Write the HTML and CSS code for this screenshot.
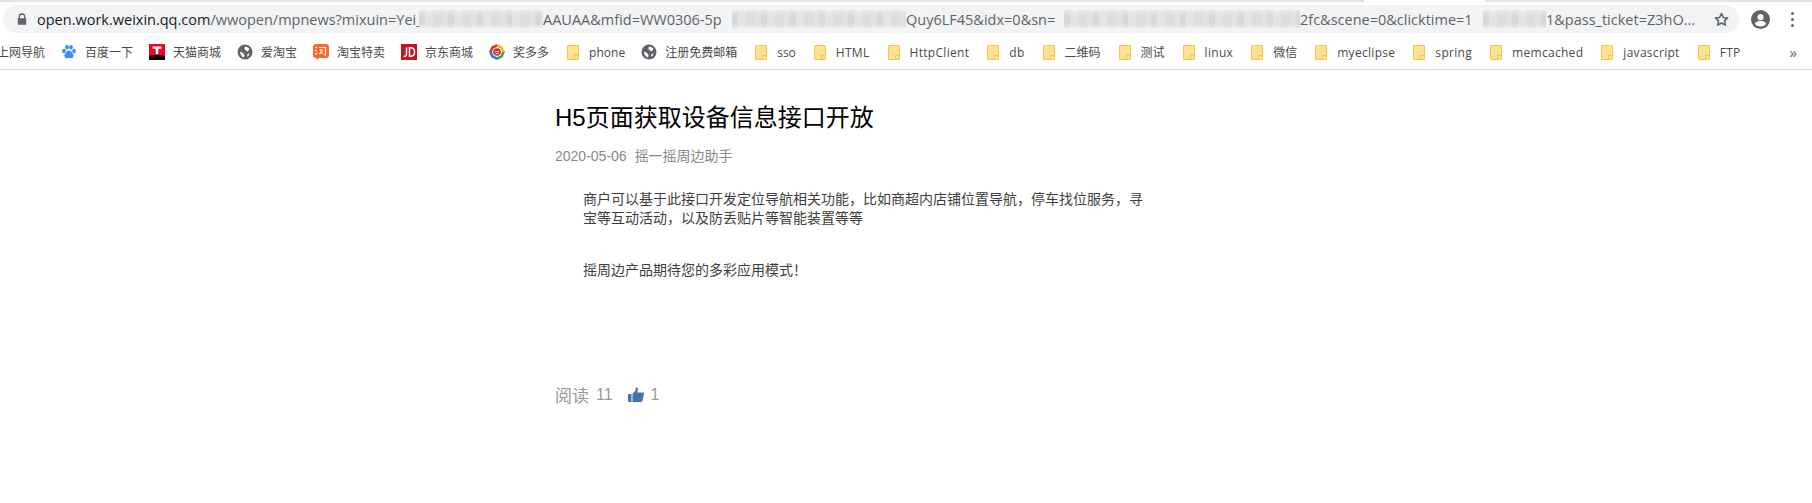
FILE: index.html
```html
<!DOCTYPE html>
<html lang="zh-CN">
<head>
    <meta charset="UTF-8">
    <title>H5页面获取设备信息接口开放</title>
    <link rel="stylesheet" href="styles.css">
</head>
<body>

    <div class="tab-strip"><span class="tab-gap"></span></div>

    <div class="toolbar">
        <div class="omnibox">
            <svg class="lock" viewBox="0 0 12 14"><path d="M2 6V4.200a4 4 0 0 1 8 0V6h1v8H1V6zm1.600 0h4.800V4.200a2.400 2.400 0 0 0-4.800 0z" fill="#5f6368"/></svg>
            <div class="url">
                <span class="seg seg-1"><b>open.work.weixin.qq.com</b>/wwopen/mpnews?mixuin=Yei_</span>
                <span class="blur blur-1"></span>
                <span class="seg seg-2">AAUAA&amp;mfid=WW0306-5p</span>
                <span class="blur blur-2"></span>
                <span class="seg seg-3">Quy6LF45&amp;idx=0&amp;sn=</span>
                <span class="blur blur-3"></span>
                <span class="seg seg-4">2fc&amp;scene=0&amp;clicktime=1</span>
                <span class="blur blur-4"></span>
                <span class="seg seg-5">1&amp;pass_ticket=Z3hO...</span>
            </div>
            <svg class="star" viewBox="0 0 24 24"><path d="M12 3.500l2.600 5.600 6.100.7-4.500 4.200 1.200 6L12 17l-5.400 3 1.200-6-4.500-4.200 6.100-.7z" fill="none" stroke="#5f6368" stroke-width="2.200" stroke-linejoin="round"/></svg>
        </div>
        <svg class="avatar" viewBox="0 0 20 20"><circle cx="10" cy="10" r="10" fill="#5f6368"/><circle cx="10" cy="7.500" r="3.200" fill="#fff"/><path d="M3.800 14.400c1.300-2.100 3.900-3.100 6.200-3.100s4.900 1 6.200 3.100a8 8 0 0 1-12.400 0z" fill="#fff"/></svg>
        <div class="menu-dots"><i></i><i></i><i></i></div>
    </div>

    <div class="bookmarks">
        <span class="bm bm-first">上网导航</span>
        <span class="bm">
            <svg class="ico" viewBox="0 0 16 16"><g fill="#3d8bf2"><ellipse cx="3" cy="7" rx="1.800" ry="2.300"/><ellipse cx="6" cy="3.300" rx="1.800" ry="2.300"/><ellipse cx="10" cy="3.300" rx="1.800" ry="2.300"/><ellipse cx="13" cy="7" rx="1.800" ry="2.300"/><path d="M8 6.500c2 0 2.500 1.700 3.600 2.800 1.300 1.300 1.400 4.700-1.300 4.900-1 .1-1.500-.4-2.300-.4s-1.300.5-2.300.4C3 14 3.100 10.600 4.400 9.300 5.500 8.200 6 6.500 8 6.500z"/></g></svg>
            百度一下
        </span>
        <span class="bm">
            <svg class="ico" viewBox="0 0 16 16"><rect width="16" height="16" fill="#000"/><path d="M0 0h16v12c-2 0-2-1-4-1H4c-2 0-2 1-4 1z" fill="#f40028"/><path d="M3.500 2.500h9v2.300H9.300V10H6.700V4.800H3.500z" fill="#fff"/></svg>
            天猫商城
        </span>
        <span class="bm">
            <svg class="ico" viewBox="0 0 16 16"><circle cx="8" cy="8" r="7.500" fill="#5f6368"/><path d="M8 2.500c2 .2 3.600 1 4.400 2.400L10.700 7.400 8.900 6.600 7.300 5zM3 7.500l3 1.500 1.500 2-.5 2.700C4.800 13 3.200 10.500 3 7.500zM10.500 10l2-.5c-.3 1.500-1 2.500-2.300 3.300z" fill="#fff"/></svg>
            爱淘宝
        </span>
        <span class="bm">
            <svg class="ico" viewBox="0 0 16 16"><path d="M3 0h10a3 3 0 0 1 3 3v8a3 3 0 0 1-3 3H6l-2.500 2v-2H3a3 3 0 0 1-3-3V3a3 3 0 0 1 3-3z" fill="#f5692a"/><path d="M2.500 3l1.500 1M2 6l1.500 1M2.500 11l1.500-2.500M6 3.500h6.500V11l-1.500-.5M6.500 6H10M8 6v3M6 9.500l4-.8" fill="none" stroke="#fff" stroke-width="1.100"/></svg>
            淘宝特卖
        </span>
        <span class="bm">
            <svg class="ico" viewBox="0 0 16 16"><rect width="16" height="16" fill="#c6121f"/><path d="M5.500 3.500v6.700c0 1.500-1 2.300-2.800 2.300M8.500 3.700v8.600h1.500c2.500 0 3.500-2 3.500-4.300S12.500 3.700 10 3.700z" fill="none" stroke="#fff" stroke-width="1.500"/></svg>
            京东商城
        </span>
        <span class="bm">
            <svg class="ico" viewBox="0 0 16 16"><path d="M8 0l5.500 2.500L16 8h-3l-1.500-3.500L8 3z" fill="#f3b91d"/><path d="M16 8l-2.500 5.500L8 16v-3l3.500-1.500L13 8z" fill="#3aa655"/><path d="M8 16l-5.500-2.500L0 8h3l1.500 3.500L8 13z" fill="#2f7fd1"/><path d="M0 8l2.500-5.500L8 0v3L4.500 4.500 3 8z" fill="#d93a2b"/><circle cx="8" cy="8" r="3.800" fill="#c9362a"/><path d="M6 7.500h4M6.500 9.500h3" stroke="#f3c9c4" stroke-width="1"/></svg>
            奖多多
        </span>
        <span class="bm"><span class="folder"></span>phone</span>
        <span class="bm">
            <svg class="ico" viewBox="0 0 16 16"><circle cx="8" cy="8" r="7.500" fill="#5f6368"/><path d="M8 2.500c2 .2 3.600 1 4.400 2.400L10.700 7.400 8.900 6.600 7.300 5zM3 7.500l3 1.500 1.500 2-.5 2.700C4.800 13 3.200 10.500 3 7.500zM10.500 10l2-.5c-.3 1.500-1 2.500-2.300 3.300z" fill="#fff"/></svg>
            注册免费邮箱
        </span>
        <span class="bm"><span class="folder"></span>sso</span>
        <span class="bm wide"><span class="folder"></span>HTML</span>
        <span class="bm wide"><span class="folder"></span>HttpClient</span>
        <span class="bm wide"><span class="folder"></span>db</span>
        <span class="bm"><span class="folder"></span>二维码</span>
        <span class="bm"><span class="folder"></span>测试</span>
        <span class="bm wide"><span class="folder"></span>linux</span>
        <span class="bm"><span class="folder"></span>微信</span>
        <span class="bm wide"><span class="folder"></span>myeclipse</span>
        <span class="bm wide"><span class="folder"></span>spring</span>
        <span class="bm wide"><span class="folder"></span>memcached</span>
        <span class="bm wide"><span class="folder"></span>javascript</span>
        <span class="bm wide"><span class="folder"></span>FTP</span>
        <span class="more">»</span>
    </div>

    <div class="article">
        <h1 class="title">H5页面获取设备信息接口开放</h1>
        <div class="meta"><span>2020-05-06</span><span>摇一摇周边助手</span></div>
        <div class="content">
            <p>商户可以基于此接口开发定位导航相关功能，比如商超内店铺位置导航，停车找位服务，寻宝等互动活动，以及防丢贴片等智能装置等等</p>
            <p class="last">摇周边产品期待您的多彩应用模式！</p>
        </div>
        <div class="stats">
            <span class="read">阅读</span>
            <span class="num">11</span>
            <svg class="thumb" viewBox="0 0 16 16"><path d="M0 7h3.500v8H1a1 1 0 0 1-1-1z" fill="#3f76ab"/><path d="M4.500 7l3-3.500V1c0-.7 2.300-.8 2.500 1 .1 1-.5 2.500-.8 3.500H14.500c1.300 0 1.700 1 1.400 2l-1.400 6c-.2.800-.7 1.500-1.700 1.500H4.500z" fill="#3f76ab"/></svg>
            <span class="num">1</span>
        </div>
    </div>

</body>
</html>
```

FILE: styles.css
```css
* {
    box-sizing: border-box;
}

body {
    margin: 0;
    background-color: #fff;
    font-family: "Liberation Sans", "Noto Sans CJK SC", sans-serif;
    overflow: hidden;
}

.tab-strip {
    height: 2px;
    background-color: #dee1e6;
    padding-left: 1364px;
}

.tab-gap {
    display: block;
    width: 121px;
    height: 2px;
    background-color: #fff;
}

/* address bar */
.toolbar {
    display: flex;
    align-items: center;
    height: 33px;
    padding: 3px 0 2px 3px;
}

.omnibox {
    display: flex;
    align-items: center;
    width: 1736px;
    height: 28px;
    padding-left: 14px;
    background-color: #f1f3f4;
    border-radius: 14px;
}

.lock {
    width: 10px;
    height: 12px;
    flex: none;
}

.url {
    display: flex;
    align-items: center;
    width: 1676px;
    margin-left: 10px;
    font-family: "Open Sans", "Liberation Sans", sans-serif;
    font-size: 14.500px;
    color: #5f6368;
    white-space: nowrap;
}

.url b {
    font-weight: normal;
    color: #202124;
}

.seg {
    display: block;
    flex: none;
}

.seg-1 { width: 382px; }
.seg-2 { width: 189px; }
.seg-3 { width: 158px; }
.seg-4 { width: 183px; }
.seg-5 { width: 156px; }

/* the smudged parts of the url */
.blur {
    display: block;
    flex: none;
    height: 18px;
    background-color: #dfe1e3;
    background-image:
        linear-gradient(180deg, rgba(241, 243, 244, 0.6), rgba(241, 243, 244, 0) 35%, rgba(241, 243, 244, 0) 75%, rgba(241, 243, 244, 0.6)),
        repeating-linear-gradient(90deg, #d6d8db 0, #d6d8db 6px, #e2e3e5 6px, #e2e3e5 14px, #dadcde 14px, #dadcde 23px, #dfe1e3 23px, #dfe1e3 29px);
}

.blur-1 { width: 124px; }
.blur-2 { width: 174px; }
.blur-3 { width: 236px; }
.blur-4 { width: 63px; }

.star {
    width: 17px;
    height: 17px;
    flex: none;
}

.avatar {
    width: 19px;
    height: 19px;
    margin-left: 12px;
    flex: none;
}

.menu-dots {
    display: flex;
    flex-direction: column;
    gap: 3px;
    margin-left: 21px;
}

.menu-dots i {
    display: block;
    width: 3px;
    height: 3px;
    border-radius: 50%;
    background-color: #5f6368;
}

/* bookmark row */
.bookmarks {
    display: flex;
    align-items: center;
    gap: 16px;
    height: 35px;
    border-bottom: 1px solid #dadce0;
    font-family: "Open Sans", "Noto Sans CJK SC", sans-serif;
    font-size: 12px;
    color: #4a4a4a;
    white-space: nowrap;
}

.bm {
    display: flex;
    align-items: center;
    gap: 8px;
    flex: none;
}

.bm-first {
    margin-left: -3px;
}

/* latin names run a little wider in the original font */
.wide {
    letter-spacing: 0.3px;
}

.ico {
    width: 16px;
    height: 16px;
    flex: none;
}

.folder {
    position: relative;
    display: block;
    width: 12px;
    height: 15px;
    margin: 0 2px;
    background-color: #fde293;
    border: 1px solid #f0c84b;
    border-radius: 1px;
}

.folder::after {
    content: "";
    position: absolute;
    right: 0;
    bottom: 0;
    width: 3px;
    height: 3px;
    border-top: 1px solid #f0c84b;
    border-left: 1px solid #f0c84b;
}

.more {
    margin-left: auto;
    margin-right: 15px;
    font-size: 15px;
    color: #5f6368;
}

/* article */
.article {
    width: 590px;
    margin-left: 555px;
    padding-top: 31px;
}

.title {
    margin: 0;
    font-size: 24px;
    font-weight: normal;
    line-height: 34px;
    color: #000;
}

.meta {
    display: flex;
    gap: 8px;
    margin-top: 11px;
    font-size: 14px;
    line-height: 20px;
    color: #888;
}

.content {
    padding-left: 28px;
    margin-top: 24px;
    font-size: 14px;
    line-height: 19px;
    color: #3e3e3e;
}

.content p {
    margin: 0 0 33px;
}

.content .last {
    margin-bottom: 0;
}

.stats {
    display: flex;
    align-items: center;
    margin-top: 102px;
    font-size: 16px;
    color: #999;
}

.read {
    font-size: 17px;
    margin-right: 7px;
}

.thumb {
    width: 16px;
    height: 16px;
    margin: 0 7px 0 15px;
}
```
